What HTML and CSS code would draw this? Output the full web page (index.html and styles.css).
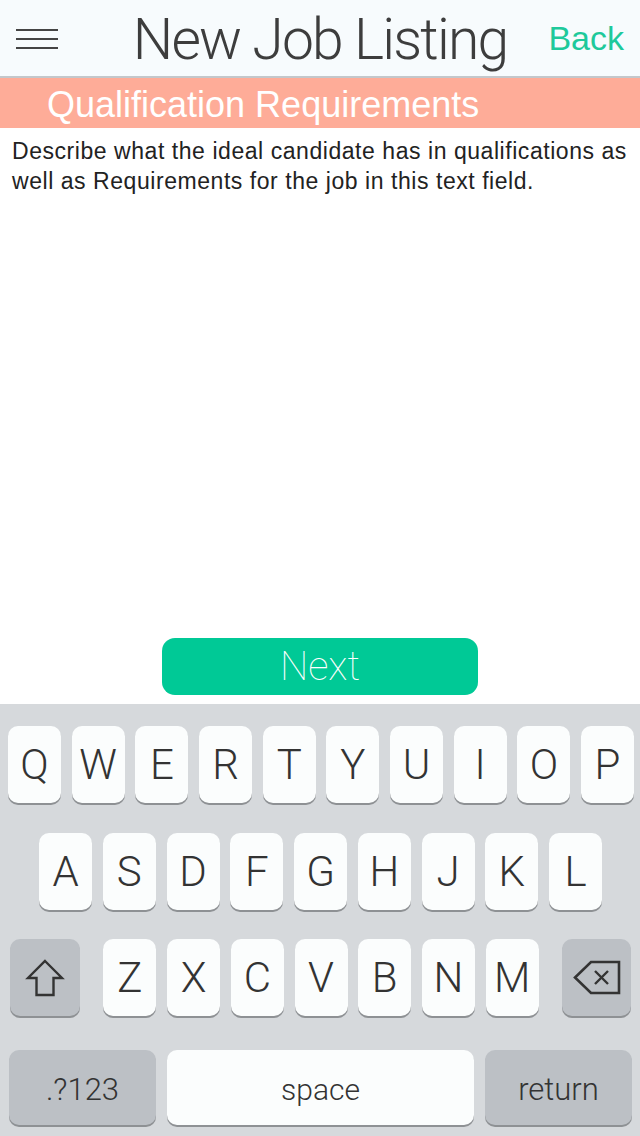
FILE: index.html
```html
<!DOCTYPE html>
<html>
<head>
<meta charset="utf-8">
<link rel="stylesheet" href="styles.css">
</head>
<body>
<div class="screen">
  <header class="topbar">
    <div class="menu"><span></span><span></span><span></span></div>
    <h1 class="title">New Job Listing</h1>
    <div class="back">Back</div>
  </header>
  <div class="section-title">Qualification Requirements</div>
  <div class="content">
    <p>Describe what the ideal candidate has in qualifications as well as Requirements for the job in this text field.</p>
  </div>
  <div class="actions"><button class="next">Next</button></div>
  <div class="keyboard">
    <div class="row row1">
      <div class="key">Q</div><div class="key">W</div><div class="key">E</div><div class="key">R</div><div class="key">T</div><div class="key">Y</div><div class="key">U</div><div class="key">I</div><div class="key">O</div><div class="key">P</div>
    </div>
    <div class="row row2">
      <div class="key">A</div><div class="key">S</div><div class="key">D</div><div class="key">F</div><div class="key">G</div><div class="key">H</div><div class="key">J</div><div class="key">K</div><div class="key">L</div>
    </div>
    <div class="row row3">
      <div class="key special shift">
        <svg width="42" height="42" viewBox="0 0 42 42"><path d="M21 4 L38 21 L29.5 21 L29.5 38 L12.5 38 L12.5 21 L4 21 Z" fill="none" stroke="#333" stroke-width="2.4" stroke-linejoin="miter"/></svg>
      </div>
      <div class="letters">
        <div class="key">Z</div><div class="key">X</div><div class="key">C</div><div class="key">V</div><div class="key">B</div><div class="key">N</div><div class="key">M</div>
      </div>
      <div class="key special del">
        <svg width="48" height="36" viewBox="0 0 48 36"><path d="M18 2 H46 V33 H18 L2 17.5 Z" fill="none" stroke="#333" stroke-width="2.6"/><path d="M22 11 L35 24 M35 11 L22 24" stroke="#333" stroke-width="2.4"/></svg>
      </div>
    </div>
    <div class="row row4">
      <div class="key special wide">.?123</div>
      <div class="key space">space</div>
      <div class="key special wide">return</div>
    </div>
  </div>
</div>
</body>
</html>
```
FILE: styles.css
```css
* { box-sizing: border-box; }
html, body { margin: 0; padding: 0; }
body { width: 640px; height: 1136px; overflow: hidden; font-family: "Liberation Sans", Arial, sans-serif; background: #fff; }
.screen { display: flex; flex-direction: column; height: 1136px; }

.topbar {
  height: 78px;
  background: #f7fbfd;
  border-bottom: 2px solid #c3c7cb;
  display: grid;
  grid-template-columns: 1fr auto 1fr;
  align-items: start;
}
.menu { display: flex; flex-direction: column; gap: 7.5px; padding: 29px 0 0 16px; }
.menu span { display: block; width: 42px; height: 1.5px; background: #444; }
.title {
  margin: 0;
  padding-top: 5px;
  font-family: Roboto, sans-serif;
  font-weight: 300;
  font-size: 57px;
  line-height: 70px;
  color: #3d3d3d;
  letter-spacing: -1.8px;
  white-space: nowrap;
}
.back {
  justify-self: end;
  padding: 18px 16px 0 0;
  font-family: "Liberation Sans", Arial, sans-serif;
  font-size: 34px;
  line-height: 40px;
  color: #1ec99b;
}

.section-title {
  height: 50px;
  background: #feac98;
  color: #fff;
  font-size: 36px;
  line-height: 50px;
  padding: 2px 0 0 47px;
  white-space: nowrap;
}

.content { flex: 1; padding: 8px 12px 0 12px; }
.content p { margin: 0; font-size: 23px; line-height: 30px; letter-spacing: 0.55px; color: #222; }

.actions { display: flex; justify-content: center; padding-bottom: 9px; }
.next {
  width: 316px; height: 57px;
  border: none; border-radius: 13px;
  background: #00c996;
  color: #fff;
  font-family: Roboto, sans-serif;
  font-weight: 100;
  font-size: 40px;
  line-height: 57px;
  padding: 0;
}

.keyboard {
  height: 432px;
  background: #d6d9dc;
  padding-top: 22px;
  display: flex;
  flex-direction: column;
}
.row { display: flex; }
.row1 { gap: 10.7px; padding: 0 6px 0 8px; }
.row2 { gap: 10.75px; padding: 0 38px 0 39px; margin-top: 30px; }
.row3 { padding: 0 9px 0 10px; margin-top: 29px; justify-content: space-between; }
.row4 { gap: 11px; padding: 0 8px 0 9px; margin-top: 34px; }
.letters { display: flex; gap: 10.7px; }
.key {
  width: 53px;
  height: 77px;
  background: #fbfdfd;
  border-radius: 10px;
  box-shadow: 0 2px 0 #8e9194;
  display: flex; align-items: center; justify-content: center;
  font-family: Roboto, sans-serif;
  font-weight: 300;
  font-size: 42px;
  color: #333;
}
.row1 .key, .row2 .key { flex: 1; }
.special { background: #bcc0c5; }
.shift { width: 70px; }
.del { width: 69px; }
.wide { width: 147px; font-size: 31px; height: 75px; padding-top: 4px; }
.space { width: 307px; font-size: 30px; height: 75px; padding-top: 4px; }
```
